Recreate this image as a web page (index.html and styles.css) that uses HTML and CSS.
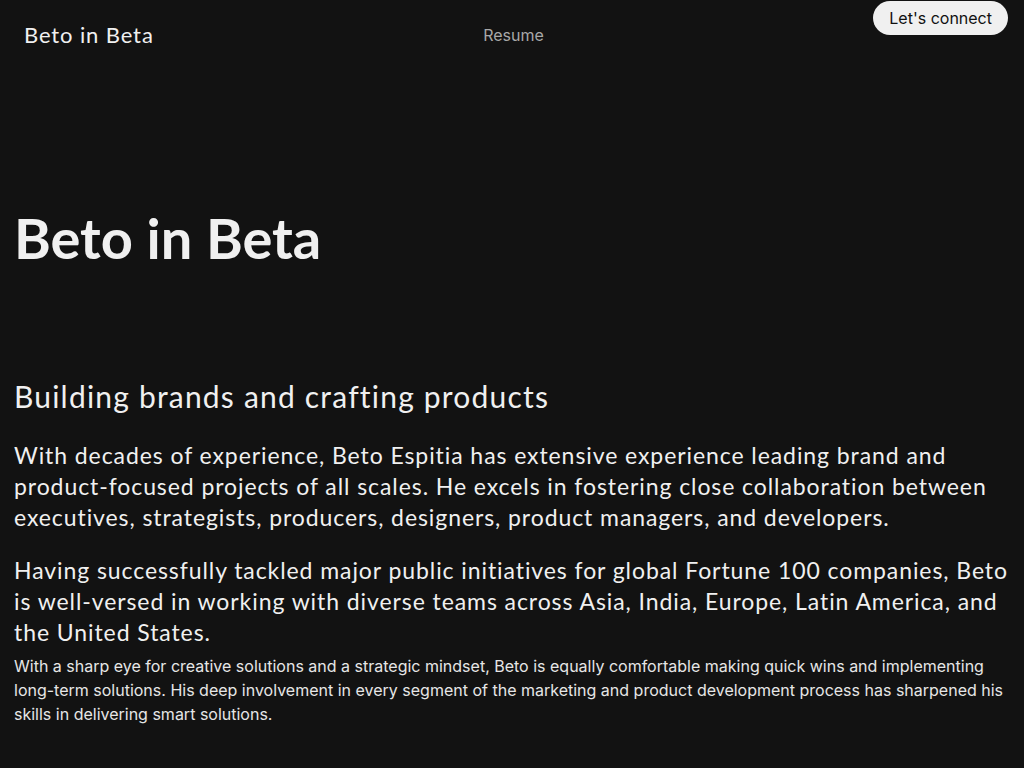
FILE: index.html
```html
<!DOCTYPE html>
<html lang="en">
<head>
    <meta charset="UTF-8">
    <meta name="viewport" content="width=device-width, initial-scale=1.0">
    <title>Beto in Beta</title>
    <link rel="stylesheet" href="styles.css">
</head>
<body>
    <header class="nav">
        <a class="nav-brand" href="#">Beto in Beta</a>
        <a class="nav-link" href="#">Resume</a>
        <a class="nav-cta" href="#">Let's connect</a>
    </header>

    <main class="content">
        <section class="hero">
            <h1>Beto in Beta</h1>
        </section>

        <section class="about">
            <h2>Building brands and crafting products</h2>
            <p class="lead">With decades of experience, Beto Espitia has extensive experience leading brand and product-focused projects of all scales. He excels in fostering close collaboration between executives, strategists, producers, designers, product managers, and developers.</p>
            <p class="lead">Having successfully tackled major public initiatives for global Fortune 100 companies, Beto is well-versed in working with diverse teams across Asia, India, Europe, Latin America, and the United States.</p>
            <p class="body-text">With a sharp eye for creative solutions and a strategic mindset, Beto is equally comfortable making quick wins and implementing long-term solutions. His deep involvement in every segment of the marketing and product development process has sharpened his skills in delivering smart solutions.</p>
        </section>
    </main>
</body>
</html>
```

FILE: styles.css
```css
body {
    margin: 0;
    background-color: #121212;
    color: #f0f0f0;
    font-family: Inter, "Liberation Sans", sans-serif;
}
a {
    text-decoration: none;
    color: inherit;
}
.nav {
    display: grid;
    grid-template-columns: 1fr auto 1fr;
    align-items: start;
    padding: 0 16px 0 19px;
    height: 70px;
}
.nav-brand {
    justify-self: start;
    margin-left: 5px;
    font-family: Lato, sans-serif;
    font-size: 22px;
    letter-spacing: 0.04em;
    line-height: 70px;
}
.nav-link {
    font-size: 16px;
    line-height: 70px;
    color: #a8a8a8;
}
.nav-cta {
    justify-self: end;
    margin-top: 1px;
    padding: 0 16px;
    height: 34px;
    line-height: 34px;
    border-radius: 17px;
    background-color: #f0f0f0;
    color: #111;
    font-size: 16px;
}
.content {
    padding: 0 14px;
}
.hero {
    padding-top: 128px;
    height: 250px;
    box-sizing: border-box;
}
.hero h1 {
    margin: 0;
    font-family: Lato, sans-serif;
    font-weight: 700;
    font-size: 56px;
    line-height: 80px;
}
.about h2 {
    margin: 56px 0 24px;
    font-family: Lato, sans-serif;
    font-weight: 400;
    font-size: 30px;
    letter-spacing: 0.04em;
    line-height: 40px;
}
.lead {
    margin: 0 0 22px;
    font-family: Lato, sans-serif;
    font-size: 23px;
    letter-spacing: 0.04em;
    line-height: 31px;
}
.body-text {
    margin: -16px 0 0;
    font-size: 16px;
    line-height: 24px;
    color: #e6e6e6;
}
```
